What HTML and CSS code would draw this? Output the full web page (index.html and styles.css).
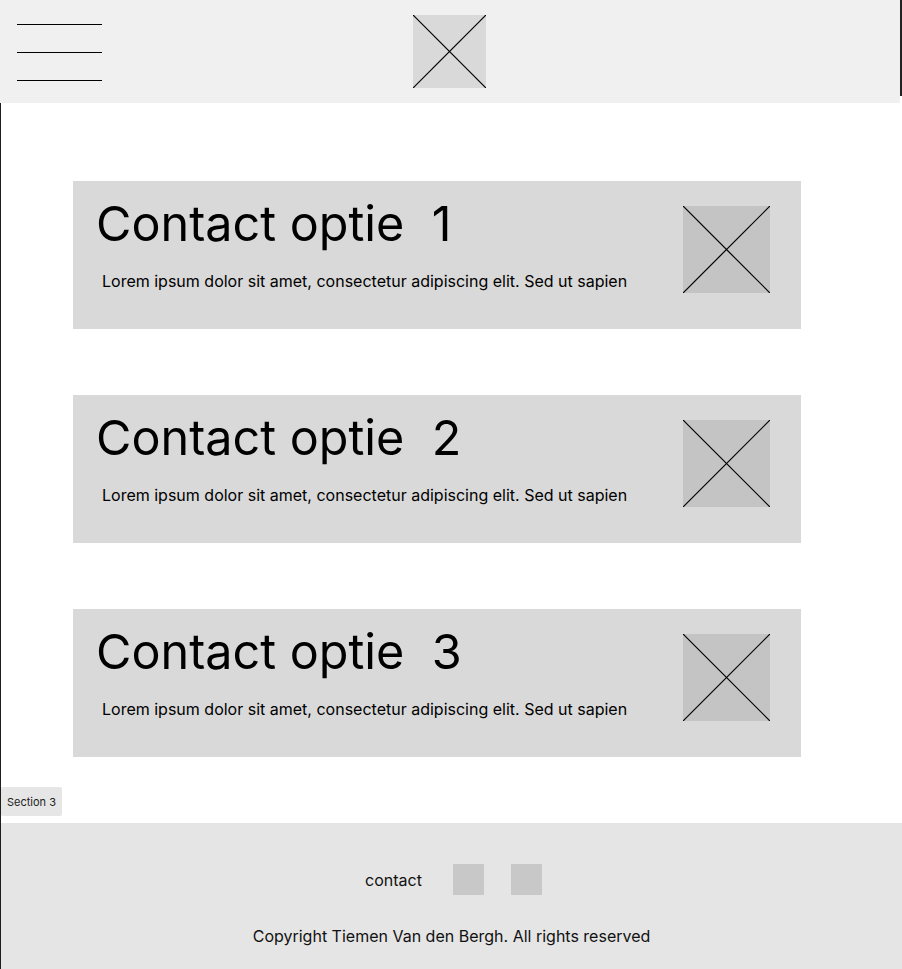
FILE: index.html
```html
<!DOCTYPE html>
<html lang="nl">
<head>
<meta charset="utf-8">
<title>Contact</title>
<link rel="stylesheet" href="styles.css">
</head>
<body>
<div class="top">
  <header class="header">
    <div class="burger">
      <span class="burger-line"></span>
      <span class="burger-line"></span>
      <span class="burger-line"></span>
    </div>
    <div class="logo">
      <svg class="cross" viewBox="0 0 73 73" preserveAspectRatio="none"><line x1="0" y1="0" x2="73" y2="73"/><line x1="73" y1="0" x2="0" y2="73"/></svg>
    </div>
    <div class="spacer"></div>
  </header>
  <div class="edge"></div>
</div>
<main class="main">
  <section class="card">
    <div class="card-text">
      <h2 class="card-title">Contact optie&nbsp; 1</h2>
      <p class="card-body">Lorem ipsum dolor sit amet, consectetur adipiscing elit. Sed ut sapien</p>
    </div>
    <div class="card-img">
      <svg class="cross" viewBox="0 0 87 87" preserveAspectRatio="none"><line x1="0" y1="0" x2="87" y2="87"/><line x1="87" y1="0" x2="0" y2="87"/></svg>
    </div>
  </section>
  <section class="card">
    <div class="card-text">
      <h2 class="card-title">Contact optie&nbsp; 2</h2>
      <p class="card-body">Lorem ipsum dolor sit amet, consectetur adipiscing elit. Sed ut sapien</p>
    </div>
    <div class="card-img">
      <svg class="cross" viewBox="0 0 87 87" preserveAspectRatio="none"><line x1="0" y1="0" x2="87" y2="87"/><line x1="87" y1="0" x2="0" y2="87"/></svg>
    </div>
  </section>
  <section class="card">
    <div class="card-text">
      <h2 class="card-title">Contact optie&nbsp; 3</h2>
      <p class="card-body">Lorem ipsum dolor sit amet, consectetur adipiscing elit. Sed ut sapien</p>
    </div>
    <div class="card-img">
      <svg class="cross" viewBox="0 0 87 87" preserveAspectRatio="none"><line x1="0" y1="0" x2="87" y2="87"/><line x1="87" y1="0" x2="0" y2="87"/></svg>
    </div>
  </section>
  <div class="section-label">Section 3</div>
  <footer class="footer">
    <div class="footer-row">
      <span class="footer-link">contact</span>
      <span class="social"></span>
      <span class="social"></span>
    </div>
    <p class="copyright">Copyright Tiemen Van den Bergh. All rights reserved</p>
  </footer>
</main>
</body>
</html>
```
FILE: styles.css
```css
* { box-sizing: border-box; }
html, body { margin: 0; padding: 0; }
body {
  font-family: Inter, "Noto Sans", sans-serif;
  color: #000;
  background: #fff;
  width: 902px;
  height: 969px;
  overflow: hidden;
}
.top {
  display: flex;
  align-items: flex-start;
}
.header {
  width: 900px;
  height: 103px;
  background: #f0f0f0;
  display: grid;
  grid-template-columns: 1fr 73px 1fr;
  align-items: start;
}
.burger {
  display: flex;
  flex-direction: column;
  gap: 27px;
  padding: 24px 0 0 17px;
}
.burger-line {
  display: block;
  width: 85px;
  height: 1px;
  background: #000;
}
.logo {
  width: 73px;
  height: 73px;
  margin: 15px 0 0 -1px;
  background: #d9d9d9;
}
.edge {
  width: 2px;
  height: 96px;
  background: #222;
}
.cross {
  display: block;
  width: 100%;
  height: 100%;
  stroke: #000;
  stroke-width: 1.2;
}
.main {
  border-left: 1px solid #1e1e1e;
  height: 866px;
  padding-top: 78px;
  display: flex;
  flex-direction: column;
}
.card {
  width: 728px;
  height: 148px;
  margin-left: 72px;
  margin-bottom: 66px;
  background: #d9d9d9;
  display: flex;
  align-items: flex-start;
}
.card-text {
  flex: 1;
  padding-top: 14px;
}
.card-title {
  margin: 0 0 0 23px;
  font-size: 48.5px;
  font-weight: 400;
  line-height: 58px;
  white-space: pre;
}
.card-body {
  margin: 19px 0 0 29px;
  font-size: 16px;
  line-height: 19px;
}
.card-img {
  width: 87px;
  height: 87px;
  margin: 25px 31px 0 0;
  background: #c4c4c4;
}
.section-label {
  margin-top: -36px;
  width: 61px;
  height: 29px;
  background: #e6e6e6;
  border-radius: 2px;
  font-size: 11px;
  color: #222;
  display: flex;
  align-items: center;
  justify-content: center;
}
.footer {
  margin-top: 7px;
  flex: 1;
  background: #e5e5e5;
  display: flex;
  flex-direction: column;
  align-items: center;
  padding-top: 41px;
  color: #111;
}
.footer-row {
  display: flex;
  align-items: center;
  padding-left: 4px;
}
.footer-link {
  font-size: 16px;
  margin-right: 31px;
}
.social {
  width: 31px;
  height: 31px;
  background: #c8c8c8;
}
.social + .social { margin-left: 27px; }
.copyright {
  margin: 32px 0 0;
  font-size: 16px;
  line-height: 19px;
}
```
